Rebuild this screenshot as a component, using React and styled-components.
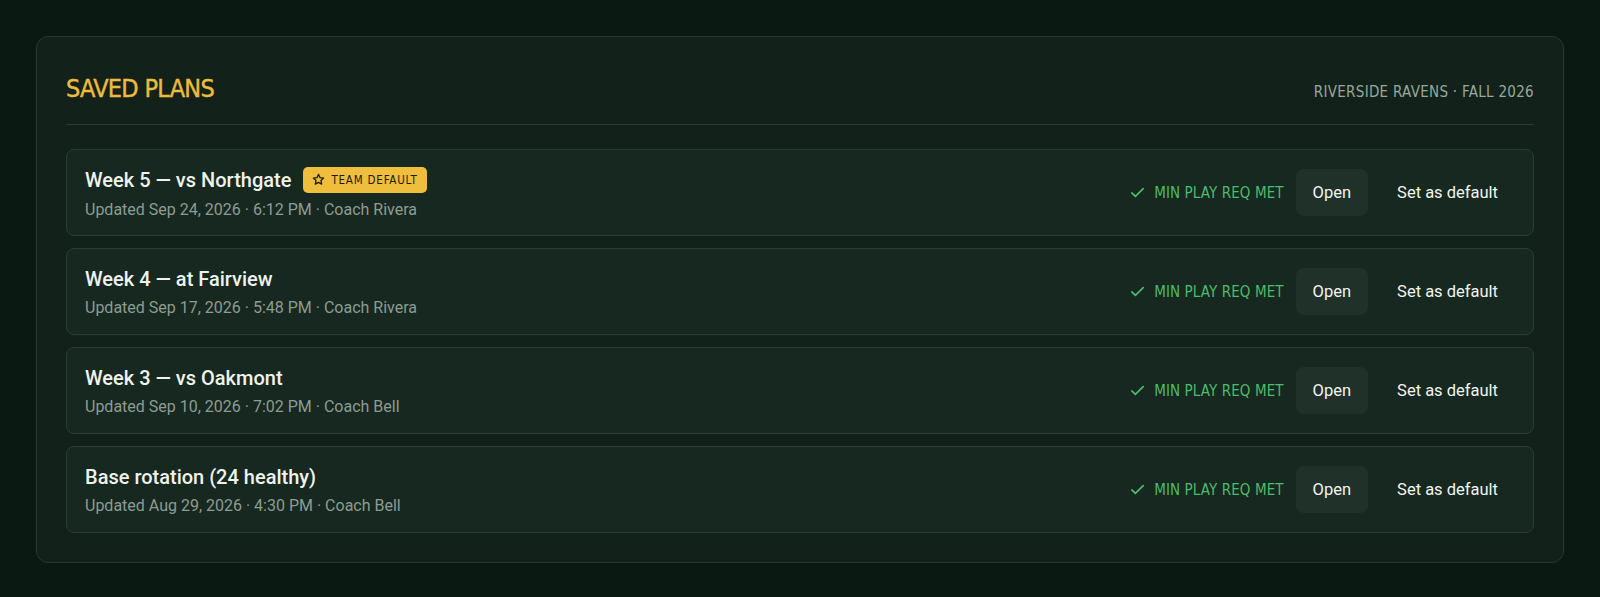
import React from 'react'
import styled, { createGlobalStyle } from 'styled-components'

const GlobalStyle = createGlobalStyle`
  html, body {
    margin: 0;
    background: #0a1912;
  }
  body {
    font-family: Roboto, "Noto Sans", sans-serif;
    color: #e9efe9;
  }
`

const condensed = `"DejaVu Sans Condensed", "DejaVu Sans", sans-serif`

const Page = styled.main`
  padding: 36px;
  min-height: 100vh;
  box-sizing: border-box;
`

const Panel = styled.section`
  background: #12211a;
  border: 1px solid #26392e;
  border-radius: 12px;
  padding: 29px 29px 29px;
`

const Header = styled.header`
  display: flex;
  align-items: center;
  justify-content: space-between;
  padding-top: 3px;
  padding-bottom: 15px;
  border-bottom: 1px solid #2a3e32;
  margin-bottom: 24px;
`

const Title = styled.h2`
  margin: 0;
  font-family: ${condensed};
  font-stretch: condensed;
  font-size: 25px;
  font-weight: 500;
  letter-spacing: -0.7px;
  color: #ecbb3f;
  line-height: 40px;
  -webkit-text-stroke: 0.4px #ecbb3f;
`

const Meta = styled.div`
  font-family: ${condensed};
  font-stretch: condensed;
  font-size: 15px;
  letter-spacing: 0.3px;
  color: #98a89d;
  padding-top: 5px;
`

const List = styled.div`
  display: flex;
  flex-direction: column;
  gap: 12px;
`

const Row = styled.article`
  display: flex;
  align-items: center;
  justify-content: space-between;
  background: #172820;
  border: 1px solid #2a3e32;
  border-radius: 8px;
  padding: 0 18px;
  height: 85px;
`

const Info = styled.div`
  display: flex;
  flex-direction: column;
  gap: 7px;
`

const NameLine = styled.div`
  display: flex;
  align-items: center;
  gap: 12px;
`

const Name = styled.span`
  font-size: 20px;
  font-weight: 500;
  color: #eef3ee;
`

const Badge = styled.span`
  display: inline-flex;
  align-items: center;
  gap: 6px;
  height: 26px;
  padding: 0 9px;
  border-radius: 5px;
  background: #efbe3d;
  color: #1e1a0c;
  font-family: ${condensed};
  font-stretch: condensed;
  font-size: 11.5px;
  font-weight: 500;
  letter-spacing: 0.8px;
`

const Sub = styled.span`
  font-size: 16px;
  color: #8d9c92;
`

const Actions = styled.div`
  display: flex;
  align-items: center;
  gap: 12px;
`

const Status = styled.span`
  display: inline-flex;
  align-items: center;
  gap: 8px;
  font-family: ${condensed};
  font-stretch: condensed;
  font-size: 15px;
  font-weight: 500;
  letter-spacing: 0.1px;
  color: #4dbb6c;
`

const Button = styled.button`
  border: 0;
  height: 47px;
  padding: 0 17px;
  border-radius: 8px;
  font-family: Roboto, sans-serif;
  font-size: 16.5px;
  color: #f1f5f1;
  cursor: pointer;
  background: ${p => (p.$filled ? '#1f3128' : 'transparent')};
`

const Star = () => (
  <svg width="13" height="13" viewBox="0 0 24 24" fill="none" stroke="currentColor" strokeWidth="2.4" strokeLinejoin="round">
    <path d="M12 2.5l2.9 6.1 6.6.8-4.9 4.5 1.3 6.6L12 17.2l-5.9 3.3 1.3-6.6-4.9-4.5 6.6-.8z" />
  </svg>
)

const Check = () => (
  <svg width="17" height="17" viewBox="0 0 24 24" fill="none" stroke="currentColor" strokeWidth="2.4" strokeLinecap="round" strokeLinejoin="round">
    <path d="M4 12.5l5 5L20 6.5" />
  </svg>
)

const plans = [
  { id: 1, name: 'Week 5 — vs Northgate', updated: 'Updated Sep 24, 2026 · 6:12 PM · Coach Rivera', isDefault: true },
  { id: 2, name: 'Week 4 — at Fairview', updated: 'Updated Sep 17, 2026 · 5:48 PM · Coach Rivera' },
  { id: 3, name: 'Week 3 — vs Oakmont', updated: 'Updated Sep 10, 2026 · 7:02 PM · Coach Bell' },
  { id: 4, name: 'Base rotation (24 healthy)', updated: 'Updated Aug 29, 2026 · 4:30 PM · Coach Bell' },
]

const App = () => {
  return (
    <Page>
      <GlobalStyle />
      <Panel>
        <Header>
          <Title>SAVED PLANS</Title>
          <Meta>RIVERSIDE RAVENS · FALL 2026</Meta>
        </Header>
        <List>
          {plans.map(plan => (
            <Row key={plan.id}>
              <Info>
                <NameLine>
                  <Name>{plan.name}</Name>
                  {plan.isDefault && (
                    <Badge>
                      <Star />
                      TEAM DEFAULT
                    </Badge>
                  )}
                </NameLine>
                <Sub>{plan.updated}</Sub>
              </Info>
              <Actions>
                <Status>
                  <Check />
                  MIN PLAY REQ MET
                </Status>
                <Button $filled>Open</Button>
                <Button>Set as default</Button>
              </Actions>
            </Row>
          ))}
        </List>
      </Panel>
    </Page>
  )
}

export default App
